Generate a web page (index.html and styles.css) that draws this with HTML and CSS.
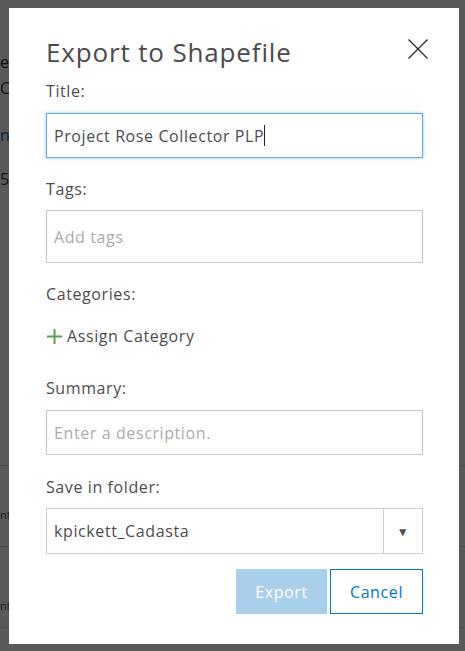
FILE: index.html
```html
<!DOCTYPE html>
<html lang="en">
<head>
<meta charset="utf-8">
<title>Export to Shapefile</title>
<link rel="stylesheet" href="styles.css">
</head>
<body>
<div class="page">
  <div class="page-head">
    <div class="pg-line t1">e</div>
    <div class="pg-line t2">Ca</div>
    <div class="pg-line t3 link">nc</div>
    <div class="pg-line t4">5</div>
  </div>
  <div class="pg-list">
    <div class="pg-row r1">nts</div>
    <div class="pg-row r2">nts</div>
  </div>
</div>

<div class="overlay">
  <div class="dialog">
    <div class="dlg-header">
      <h1 class="dlg-title">Export to Shapefile</h1>
      <button class="dlg-close" aria-label="Close">
        <svg width="20" height="20" viewBox="0 0 20 20"><path d="M0.5 0.5 L19.5 19.5 M19.5 0.5 L0.5 19.5" stroke="#2b2b2b" stroke-width="1.3" fill="none"/></svg>
      </button>
    </div>

    <div class="lbl lbl-title">Title:</div>
    <div class="field field-title focused">Project Rose Collector PLP<span class="caret"></span></div>

    <div class="lbl lbl-tags">Tags:</div>
    <div class="field field-tags placeholder">Add tags</div>

    <div class="lbl lbl-cat">Categories:</div>
    <div class="assign">
      <svg width="15" height="15" viewBox="0 0 15 15"><path d="M7.5 0 V15 M0 7.5 H15" stroke="#5c9e5c" stroke-width="2" fill="none"/></svg>
      <span>Assign Category</span>
    </div>

    <div class="lbl lbl-sum">Summary:</div>
    <div class="field field-sum placeholder">Enter a description.</div>

    <div class="lbl lbl-folder">Save in folder:</div>
    <div class="select">
      <span class="select-value">kpickett_Cadasta</span>
      <span class="select-arrow">▼</span>
    </div>

    <div class="actions">
      <button class="btn btn-primary">Export</button>
      <button class="btn btn-secondary">Cancel</button>
    </div>
  </div>
</div>
</body>
</html>
```
FILE: styles.css
```css
* { box-sizing: border-box; }
html, body { margin: 0; padding: 0; }
body {
  width: 465px;
  height: 651px;
  overflow: hidden;
  background: #ffffff;
  font-family: "Open Sans", Lato, sans-serif;
  color: #4c4c4c;
  position: relative;
  letter-spacing: 0.6px;
}

/* underlying page */
.page { padding-top: 52px; letter-spacing: 0; }
.pg-line { font-size: 16px; line-height: 20px; color: #333; }
.t2 { margin-top: 6px; }
.t3 { margin-top: 27px; }
.t4 { margin-top: 24px; }
.link { color: #1c6fa8; }
.pg-list { margin-top: 276px; border-top: 1px solid #d8d8d8; }
.pg-row {
  height: 81px;
  border-bottom: 1px solid #d8d8d8;
  font-size: 11px;
  line-height: 14px;
  color: #555;
}
.r1 { padding-top: 42px; }
.r2 { padding-top: 52px; }

/* modal */
.overlay {
  position: absolute;
  inset: 0;
  background: rgba(0, 0, 0, 0.65);
  padding: 8px 0 0 9px;
}
.dialog {
  width: 450px;
  height: 636px;
  background: #fff;
  padding: 28px 36px 0 37px;
}
.dlg-header {
  display: flex;
  justify-content: space-between;
  align-items: flex-start;
}
.dlg-title {
  margin: 0;
  font-size: 26px;
  line-height: 32px;
  font-weight: 400;
  color: #4a4a4a;
  letter-spacing: 0.85px;
}
.dlg-close {
  border: 0;
  background: none;
  padding: 0;
  margin: 3px -5px 0 0;
  width: 20px;
  height: 20px;
  display: block;
}
.dlg-close svg { display: block; }

.lbl {
  font-size: 16px;
  line-height: 20px;
  color: #4c4c4c;
}
.lbl-title { margin-top: 13px; }
.lbl-tags { margin-top: 21px; }
.lbl-cat { margin-top: 21px; }
.lbl-sum { margin-top: 32px; }
.lbl-folder { margin-top: 22px; }

.field {
  width: 377px;
  border: 1px solid #c6c6c6;
  padding: 0 7px;
  font-size: 16px;
  display: flex;
  align-items: center;
  color: #4c4c4c;
}
.field-title {
  height: 45px;
  margin-top: 12px;
  border-color: #6aa9d8;
  box-shadow: 0 0 3px rgba(0, 121, 193, 0.45);
}
.caret {
  display: inline-block;
  width: 1px;
  height: 21px;
  background: #222;
  margin-left: -0.6px;
}
.field-tags { height: 53px; margin-top: 11px; }
.field-sum { height: 45px; margin-top: 12px; }
.placeholder { color: #ababab; }

.assign {
  margin-top: 22px;
  display: flex;
  align-items: center;
  gap: 5px;
  font-size: 16px;
  line-height: 20px;
  color: #4c4c4c;
  padding-left: 1px;
}
.assign svg { display: block; }

.select {
  width: 377px;
  height: 46px;
  margin-top: 11px;
  border: 1px solid #cfcfcf;
  display: flex;
  align-items: stretch;
  font-size: 16px;
}
.select-value {
  flex: 1;
  display: flex;
  align-items: center;
  padding-left: 7px;
  color: #4c4c4c;
}
.select-arrow {
  width: 39px;
  border-left: 1px solid #cfcfcf;
  display: flex;
  align-items: center;
  justify-content: center;
  font-size: 12px;
  color: #4c4c4c;
}

.actions {
  margin-top: 15px;
  width: 377px;
  display: flex;
  justify-content: flex-end;
  gap: 3px;
}
.btn {
  height: 45px;
  font-family: inherit;
  font-size: 16px;
  letter-spacing: 0.6px;
  padding: 0;
}
.btn-primary {
  width: 91px;
  background: #a8d0ea;
  border: 1px solid #a8d0ea;
  color: #fff;
}
.btn-secondary {
  width: 93px;
  background: #fff;
  border: 1px solid #0079c1;
  color: #0079c1;
}
```
